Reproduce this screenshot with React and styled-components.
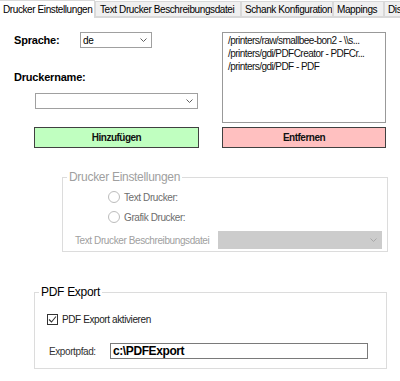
import React from 'react';
import styled, { createGlobalStyle } from 'styled-components';

const GlobalStyle = createGlobalStyle`
    html, body {
        margin: 0;
        padding: 0;
        background: #fff;
    }
    body {
        font-family: "Liberation Sans", Arial, sans-serif;
        font-size: 10px;
        letter-spacing: -0.4px;
        color: #000;
    }
`

const Window = styled.div`
    width: 400px;
    height: 381px;
    overflow: hidden;
    background: #fff;
`

const TabBar = styled.div`
    display: flex;
    align-items: flex-end;
    height: 18px;
    box-sizing: border-box;
    border-bottom: 1px solid #d9d9d9;
    overflow: visible;
`

const Tab = styled.div`
    flex-shrink: 0;
    box-sizing: border-box;
    width: ${props => props.$width}px;
    height: ${props => props.$active ? 18 : 16}px;
    margin-bottom: ${props => props.$active ? -1 : 0}px;
    background: ${props => props.$active ? '#fff' : '#f0f0f0'};
    border: 1px solid #d9d9d9;
    border-bottom: ${props => props.$active ? 'none' : '1px solid #d9d9d9'};
    border-left-width: ${props => props.$first ? 0 : 1}px;
    display: flex;
    align-items: center;
    padding-left: ${props => props.$pad}px;
    white-space: nowrap;
    overflow: hidden;
`

const Body = styled.div`
    padding: 14px 0 0 14px;
`

const TopGrid = styled.div`
    display: grid;
    grid-template-columns: 185px 164px;
    grid-template-rows: 91px 21px;
    column-gap: 23px;
    row-gap: 4px;
`

const LeftColumn = styled.div`
    display: flex;
    flex-direction: column;
`

const LangRow = styled.div`
    display: flex;
    align-items: center;
    height: 16px;
`

const BoldLabel = styled.div`
    font-weight: bold;
    font-size: 11px;
    letter-spacing: -0.2px;
    line-height: 13px;
    width: ${props => props.$width || 'auto'};
    margin-top: ${props => props.$top || 0}px;
`

const Select = styled.div`
    box-sizing: border-box;
    width: ${props => props.$width}px;
    height: ${props => props.$height || 16}px;
    margin: ${props => props.$top || 0}px 0 0 ${props => props.$left || 0}px;
    border: 1px solid ${props => props.$disabled ? '#cccccc' : '#a0a0a0'};
    background: ${props => props.$disabled ? '#cccccc' : '#fff'};
    display: flex;
    align-items: center;
    justify-content: space-between;
    padding: 0 4px 0 2px;
    flex-shrink: 0;
`

const ListBox = styled.div`
    box-sizing: border-box;
    border: 1px solid #999;
    background: #fff;
    padding: 1px 5px;
`

const ListItem = styled.div`
    line-height: 13px;
    white-space: nowrap;
    letter-spacing: -0.55px;
    color: #111;
`

const ActionButton = styled.div`
    box-sizing: border-box;
    margin-left: ${props => props.$left || 0}px;
    height: 21px;
    border: 1px solid #404040;
    background: ${props => props.$color};
    display: flex;
    align-items: center;
    justify-content: center;
    font-weight: bold;
    letter-spacing: -0.5px;
    color: #111;
`

const Group = styled.fieldset`
    box-sizing: border-box;
    width: ${props => props.$width}px;
    min-width: 0;
    margin: ${props => props.$top}px 0 0 ${props => props.$left}px;
    padding: 0 0 ${props => props.$bottom}px 0;
    border: 1px solid #dcdcdc;
`

const Legend = styled.legend`
    font-size: 12px;
    line-height: 14px;
    letter-spacing: -0.3px;
    padding: 0 2px;
    margin-left: 4px;
    color: ${props => props.$disabled ? '#a0a0a0' : '#000'};
`

const OptionRow = styled.div`
    display: flex;
    align-items: center;
    height: 14px;
    margin: ${props => props.$top}px 0 0 ${props => props.$left}px;
    gap: 4px;
    color: ${props => props.$disabled ? '#6d6d6d' : '#222'};
`

const RadioCircle = styled.span`
    box-sizing: border-box;
    width: 12px;
    height: 12px;
    border-radius: 50%;
    border: 1px solid #bcbcbc;
    background: #fff;
`

const CheckBox = styled.span`
    box-sizing: border-box;
    width: 11px;
    height: 11px;
    border: 1px solid #333;
    background: #fff;
    display: flex;
    align-items: center;
    justify-content: center;
`

const FieldRow = styled.div`
    display: flex;
    align-items: center;
    margin: ${props => props.$top}px 0 0 ${props => props.$left}px;
`

const FieldLabel = styled.span`
    width: ${props => props.$width}px;
    flex-shrink: 0;
    color: ${props => props.$disabled ? '#a0a0a0' : '#333'};
    white-space: nowrap;
`

const TextInput = styled.div`
    box-sizing: border-box;
    width: ${props => props.$width}px;
    height: 16px;
    border: 1px solid #7a7a7a;
    background: #fff;
    display: flex;
    align-items: center;
    padding-left: 2px;
    font-weight: bold;
    font-size: 12px;
    letter-spacing: -0.4px;
`

const Chevron = ({ color = '#606060' }) => (
    <svg width="7" height="4" viewBox="0 0 7 4">
        <path d="M0.5 0.5 L3.5 3.5 L6.5 0.5" fill="none" stroke={color} strokeWidth="1" />
    </svg>
)

const tabs = [
    { label: 'Drucker Einstellungen', width: 95, pad: 3, active: true },
    { label: 'Text Drucker Beschreibungsdatei', width: 146, pad: 4 },
    { label: 'Schank Konfiguration', width: 92, pad: 3 },
    { label: 'Mappings', width: 51, pad: 3 },
    { label: 'Dis', width: 40, pad: 3 },
]

const printers = [
    '/printers/raw/smallbee-bon2 - \\\\s...',
    '/printers/gdi/PDFCreator - PDFCr...',
    '/printers/gdi/PDF - PDF',
]

export default function App() {
    return (
        <Window>
            <GlobalStyle />
            <TabBar>
                {tabs.map((t, i) => (
                    <Tab key={t.label} $width={t.width} $pad={t.pad} $active={t.active} $first={i === 0}>
                        {t.label}
                    </Tab>
                ))}
            </TabBar>
            <Body>
                <TopGrid>
                    <LeftColumn>
                        <LangRow>
                            <BoldLabel $width="66px">Sprache:</BoldLabel>
                            <Select $width={72}>
                                <span>de</span>
                                <Chevron />
                            </Select>
                        </LangRow>
                        <BoldLabel $top={23}>Druckername:</BoldLabel>
                        <Select $width={163} $top={9} $left={21}>
                            <span></span>
                            <Chevron />
                        </Select>
                    </LeftColumn>
                    <ListBox>
                        {printers.map(p => <ListItem key={p}>{p}</ListItem>)}
                    </ListBox>
                    <ActionButton $color="#c0ffc0" $left={20}>Hinzufügen</ActionButton>
                    <ActionButton $color="#ffc0c0">Entfernen</ActionButton>
                </TopGrid>

                <Group $width={326} $top={22} $left={48} $bottom={2}>
                    <Legend $disabled>Drucker Einstellungen</Legend>
                    <OptionRow $top={6} $left={45} $disabled>
                        <RadioCircle />
                        <span>Text Drucker:</span>
                    </OptionRow>
                    <OptionRow $top={6} $left={45} $disabled>
                        <RadioCircle />
                        <span>Grafik Drucker:</span>
                    </OptionRow>
                    <FieldRow $top={7} $left={12}>
                        <FieldLabel $width={143} $disabled>Text Drucker Beschreibungsdatei</FieldLabel>
                        <Select $width={164} $height={18} $disabled>
                            <span></span>
                            <Chevron color="#a8a8a8" />
                        </Select>
                    </FieldRow>
                </Group>

                <Group $width={353} $top={33} $left={20} $bottom={9}>
                    <Legend>PDF Export</Legend>
                    <OptionRow $top={13} $left={12}>
                        <CheckBox>
                            <svg width="9" height="9" viewBox="0 0 9 9">
                                <path d="M1 4.5 L3.5 7 L8 1.5" fill="none" stroke="#333" strokeWidth="1.1" />
                            </svg>
                        </CheckBox>
                        <span>PDF Export aktivieren</span>
                    </OptionRow>
                    <FieldRow $top={17} $left={14}>
                        <FieldLabel $width={61}>Exportpfad:</FieldLabel>
                        <TextInput $width={258}>c:\PDFExport</TextInput>
                    </FieldRow>
                </Group>
            </Body>
        </Window>
    )
}
